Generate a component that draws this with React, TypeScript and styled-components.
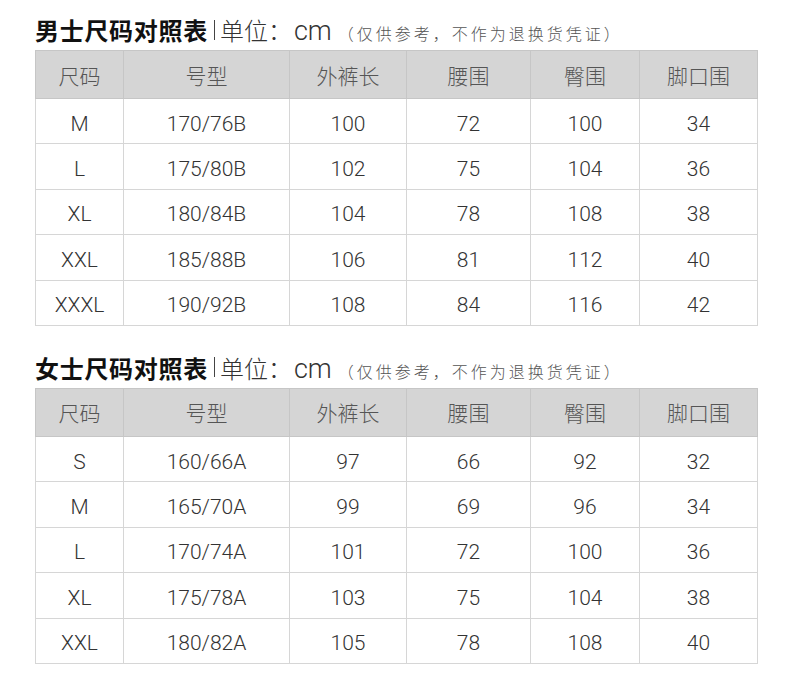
import React, {FC} from 'react';
import styled, {createGlobalStyle} from 'styled-components';

interface SizeChartProps {
    title: string
    rows: string[][]
}

const headers = ['尺码', '号型', '外裤长', '腰围', '臀围', '脚口围']
const colWidths = [88, 166, 117, 124, 109, 118]

const menRows = [
    ['M', '170/76B', '100', '72', '100', '34'],
    ['L', '175/80B', '102', '75', '104', '36'],
    ['XL', '180/84B', '104', '78', '108', '38'],
    ['XXL', '185/88B', '106', '81', '112', '40'],
    ['XXXL', '190/92B', '108', '84', '116', '42'],
]

const womenRows = [
    ['S', '160/66A', '97', '66', '92', '32'],
    ['M', '165/70A', '99', '69', '96', '34'],
    ['L', '170/74A', '101', '72', '100', '36'],
    ['XL', '175/78A', '103', '75', '104', '38'],
    ['XXL', '180/82A', '105', '78', '108', '40'],
]

const SizeChart: FC<SizeChartProps> = ({title, rows}) => {
    return (
        <Section>
            <Title>
                <TitleMain>{title}</TitleMain>
                <Bar/>
                <Unit>单位：</Unit>
                <Cm>cm</Cm>
                <Note>（仅供参考，不作为退换货凭证）</Note>
            </Title>
            <Table>
                <colgroup>
                    {colWidths.map((w, i) => <col key={i} style={{width: w}}/>)}
                </colgroup>
                <thead>
                <tr>
                    {headers.map(h => <Th key={h}>{h}</Th>)}
                </tr>
                </thead>
                <tbody>
                {rows.map(r => (
                    <tr key={r[0]}>
                        {r.map((c, i) => <Td key={i}>{c}</Td>)}
                    </tr>
                ))}
                </tbody>
            </Table>
        </Section>
    );
};

const App: FC = () => {
    return (
        <>
            <GlobalStyle/>
            <Page>
                <SizeChart title='男士尺码对照表' rows={menRows}/>
                <SizeChart title='女士尺码对照表' rows={womenRows}/>
            </Page>
        </>
    );
};

export default App;


const GlobalStyle = createGlobalStyle`
  body {
    margin: 0;
    background: #fff;
    font-family: "Liberation Sans", "Noto Sans CJK SC", sans-serif;
  }
`
const Page = styled.div`
  width: 790px;
  height: 694px;
  padding: 14px 0 0 35px;
  box-sizing: border-box;
  display: flex;
  flex-direction: column;
  gap: 26px;
`
const Section = styled.div`
  display: flex;
  flex-direction: column;
  gap: 5px;
`
const Title = styled.div`
  display: flex;
  align-items: baseline;
  height: 31px;
  line-height: 31px;
  white-space: nowrap;
`
const TitleMain = styled.span`
  font-family: "Noto Sans CJK SC", sans-serif;
  font-weight: 700;
  font-size: 24px;
  color: #111;
  letter-spacing: 0.7px;
`
const Bar = styled.span`
  display: inline-block;
  width: 1px;
  height: 20px;
  background: #444;
  margin: 0 5px 0 6px;
  align-self: center;
`
const Unit = styled.span`
  font-family: "Noto Sans CJK SC", sans-serif;
  font-weight: 300;
  font-size: 24px;
  color: #333;
`
const Cm = styled.span`
  font-family: Roboto, "Liberation Sans", sans-serif;
  font-weight: 300;
  font-size: 27px;
  color: #333;
  margin-left: 2px;
`
const Note = styled.span`
  font-family: "Noto Sans CJK SC", sans-serif;
  font-weight: 300;
  font-size: 16px;
  color: #555;
  letter-spacing: 3px;
  margin-left: 6px;
`
const Table = styled.table`
  width: 722px;
  border-collapse: collapse;
  table-layout: fixed;
`
const Th = styled.th`
  height: 47px;
  padding: 0;
  background: #d5d5d5;
  border: 1px solid #c6c6c6;
  font-family: "Noto Sans CJK SC", sans-serif;
  font-weight: 300;
  font-size: 21px;
  color: #555;
  text-align: center;
`
const Td = styled.td`
  height: 39.4px;
  padding: 5px 0 0;
  border: 1px solid #d6d6d6;
  font-family: Roboto, "Liberation Sans", sans-serif;
  font-weight: 300;
  font-size: 21px;
  color: #333;
  text-align: center;
  vertical-align: middle;
`
